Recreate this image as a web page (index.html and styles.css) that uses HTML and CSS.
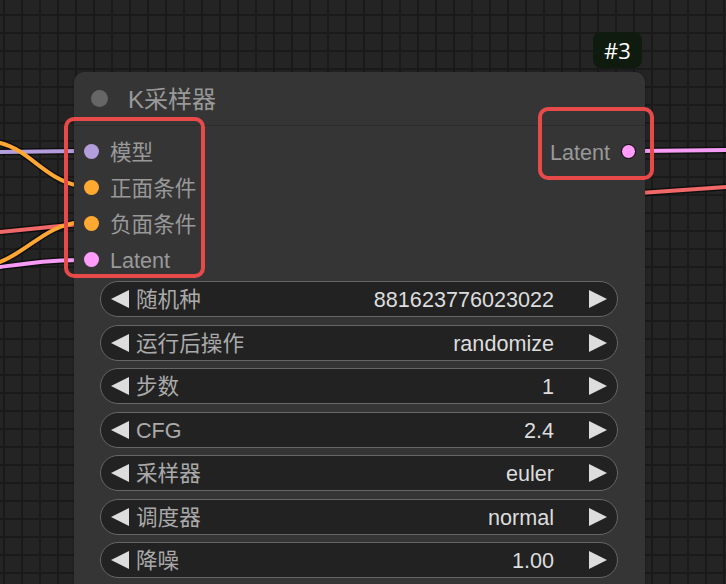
FILE: index.html
```html
<!DOCTYPE html>
<html lang="zh">
<head>
<meta charset="utf-8">
<title>K采样器</title>
<link rel="stylesheet" href="styles.css">
</head>
<body>
<div class="canvas">
  <svg class="wires" width="726" height="584" viewBox="0 0 726 584">
    <g class="shadow">
      <path d="M0 152 L80 151"/>
      <path d="M0 143 C30 150 45 180 80 186"/>
      <path d="M0 232 L80 224"/>
      <path d="M0 262 C30 250 45 226 80 222"/>
      <path d="M0 267 C30 263 50 260 80 260"/>
      <path d="M640 151 L726 150"/>
      <path d="M640 193 L726 187"/>
    </g>
    <path class="w purple" d="M0 152 L80 151"/>
    <path class="w orange" d="M0 143 C30 150 45 180 80 186"/>
    <path class="w red" d="M0 232 L80 224"/>
    <path class="w orange" d="M0 262 C30 250 45 226 80 222"/>
    <path class="w pink" d="M0 267 C30 263 50 260 80 260"/>
    <path class="w pink" d="M640 151 L726 150"/>
    <path class="w red" d="M640 193 L726 187"/>
  </svg>

  <div class="badge">#3</div>

  <div class="node">
    <div class="title">
      <span class="tdot"></span>
      <span class="ttext">K采样器</span>
    </div>
    <div class="body">
      <div class="slots">
        <div class="inputs">
          <div class="slot"><span class="dot c-model"></span><span class="slabel">模型</span></div>
          <div class="slot"><span class="dot c-cond"></span><span class="slabel">正面条件</span></div>
          <div class="slot"><span class="dot c-cond"></span><span class="slabel">负面条件</span></div>
          <div class="slot"><span class="dot c-latent"></span><span class="slabel">Latent</span></div>
        </div>
        <div class="outputs">
          <div class="slot out"><span class="slabel">Latent</span><span class="dot c-latent ring"></span></div>
        </div>
      </div>
      <div class="widgets">
        <div class="widget">
          <svg class="arrow" viewBox="0 0 18 18"><polygon points="0,9 18,0 18,18"/></svg>
          <span class="wlabel">随机种</span>
          <span class="wvalue">881623776023022</span>
          <svg class="arrow r" viewBox="0 0 18 18"><polygon points="18,9 0,0 0,18"/></svg>
        </div>
        <div class="widget">
          <svg class="arrow" viewBox="0 0 18 18"><polygon points="0,9 18,0 18,18"/></svg>
          <span class="wlabel">运行后操作</span>
          <span class="wvalue">randomize</span>
          <svg class="arrow r" viewBox="0 0 18 18"><polygon points="18,9 0,0 0,18"/></svg>
        </div>
        <div class="widget">
          <svg class="arrow" viewBox="0 0 18 18"><polygon points="0,9 18,0 18,18"/></svg>
          <span class="wlabel">步数</span>
          <span class="wvalue">1</span>
          <svg class="arrow r" viewBox="0 0 18 18"><polygon points="18,9 0,0 0,18"/></svg>
        </div>
        <div class="widget">
          <svg class="arrow" viewBox="0 0 18 18"><polygon points="0,9 18,0 18,18"/></svg>
          <span class="wlabel">CFG</span>
          <span class="wvalue">2.4</span>
          <svg class="arrow r" viewBox="0 0 18 18"><polygon points="18,9 0,0 0,18"/></svg>
        </div>
        <div class="widget">
          <svg class="arrow" viewBox="0 0 18 18"><polygon points="0,9 18,0 18,18"/></svg>
          <span class="wlabel">采样器</span>
          <span class="wvalue">euler</span>
          <svg class="arrow r" viewBox="0 0 18 18"><polygon points="18,9 0,0 0,18"/></svg>
        </div>
        <div class="widget">
          <svg class="arrow" viewBox="0 0 18 18"><polygon points="0,9 18,0 18,18"/></svg>
          <span class="wlabel">调度器</span>
          <span class="wvalue">normal</span>
          <svg class="arrow r" viewBox="0 0 18 18"><polygon points="18,9 0,0 0,18"/></svg>
        </div>
        <div class="widget">
          <svg class="arrow" viewBox="0 0 18 18"><polygon points="0,9 18,0 18,18"/></svg>
          <span class="wlabel">降噪</span>
          <span class="wvalue">1.00</span>
          <svg class="arrow r" viewBox="0 0 18 18"><polygon points="18,9 0,0 0,18"/></svg>
        </div>
      </div>
    </div>
  </div>

  <div class="hl hl-in"></div>
  <div class="hl hl-out"></div>
</div>
</body>
</html>
```

FILE: styles.css
```css
html, body {
  margin: 0;
  padding: 0;
  width: 726px;
  height: 584px;
  overflow: hidden;
  background: #232323;
}

.canvas {
  position: relative;
  width: 726px;
  height: 584px;
  overflow: hidden;
  background-color: #242424;
  background-image:
    linear-gradient(to right, #1a1a1a 2px, transparent 2px),
    linear-gradient(to bottom, #1a1a1a 2px, transparent 2px);
  background-size: 18px 18px;
  background-position: 3px 14px;
  font-family: "Liberation Sans", "Noto Sans CJK SC", Arial, sans-serif;
}

.wires {
  position: absolute;
  left: 0;
  top: 0;
}

.wires path {
  fill: none;
  stroke-linecap: round;
}

.wires .shadow path {
  stroke: rgba(0, 0, 0, 0.55);
  stroke-width: 7;
}

.wires .w { stroke-width: 4; }
.wires .purple { stroke: #b49ddc; }
.wires .orange { stroke: #ffa733; }
.wires .red { stroke: #f06868; }
.wires .pink { stroke: #f79cf6; }

.badge {
  position: absolute;
  left: 593px;
  top: 32px;
  width: 49px;
  height: 36px;
  border-radius: 8px;
  background: #0e1b0e;
  color: #ffffff;
  font-family: "Open Sans", "Noto Sans", "Liberation Sans", sans-serif;
  font-size: 22px;
  font-weight: 500;
  display: flex;
  align-items: center;
  justify-content: center;
}

.node {
  position: absolute;
  left: 74px;
  top: 72px;
  width: 571px;
  height: 540px;
  background: #353535;
  border-radius: 10px 10px 0 0;
  box-shadow: 0 0 3px rgba(0, 0, 0, 0.3);
}

.title {
  height: 53px;
  border-bottom: 1px solid #2c2c2c;
  display: flex;
  align-items: center;
  padding-left: 17px;
}

.tdot {
  width: 17px;
  height: 17px;
  border-radius: 50%;
  background: #666666;
}

.ttext {
  margin-left: 20px;
  font-size: 24px;
  color: #999999;
  line-height: 1;
  position: relative;
  top: 1px;
}

.body {
  display: flex;
  flex-direction: column;
}

.slots {
  display: flex;
  justify-content: space-between;
  padding-top: 7px;
}

.inputs, .outputs {
  display: flex;
  flex-direction: column;
}

.slot {
  height: 36px;
  display: flex;
  align-items: center;
  padding-left: 10px;
}

.slot.out {
  padding-left: 0;
  padding-right: 9px;
}

.dot {
  width: 15px;
  height: 15px;
  border-radius: 50%;
  box-sizing: border-box;
}

.dot.ring {
  border: 1.5px solid #000000;
}

.c-model { background: #b39ddb; }
.c-cond { background: #ffa931; }
.c-latent { background: #ff9cf9; }

.slabel {
  font-size: 21.6px;
  color: #999999;
  margin-left: 11px;
  line-height: 1;
  position: relative;
  top: 2px;
}

.slot.out .slabel {
  margin-left: 0;
  margin-right: 11px;
}

.widgets {
  display: flex;
  flex-direction: column;
  gap: 7.5px;
  padding: 4px 27px 0 26px;
}

.widget {
  height: 36px;
  box-sizing: border-box;
  border: 1.5px solid #666666;
  border-radius: 18px;
  background: #222222;
  display: flex;
  align-items: center;
  padding: 0 10px 0 10px;
}

.arrow {
  width: 18px;
  height: 18px;
  flex: none;
}

.arrow polygon { fill: #dddddd; }

.wlabel {
  margin-left: 7px;
  font-size: 21.6px;
  color: #aaaaaa;
  line-height: 1;
  position: relative;
  top: 1px;
}

.wvalue {
  margin-left: auto;
  margin-right: 35px;
  font-size: 21.6px;
  color: #dddddd;
  line-height: 1;
  position: relative;
  top: 1px;
}

.hl {
  position: absolute;
  border: 4.5px solid #e84a4a;
  border-radius: 10px;
  box-sizing: border-box;
}

.hl-in {
  left: 64px;
  top: 117px;
  width: 141px;
  height: 161px;
}

.hl-out {
  left: 538px;
  top: 107px;
  width: 116px;
  height: 73px;
}
```
